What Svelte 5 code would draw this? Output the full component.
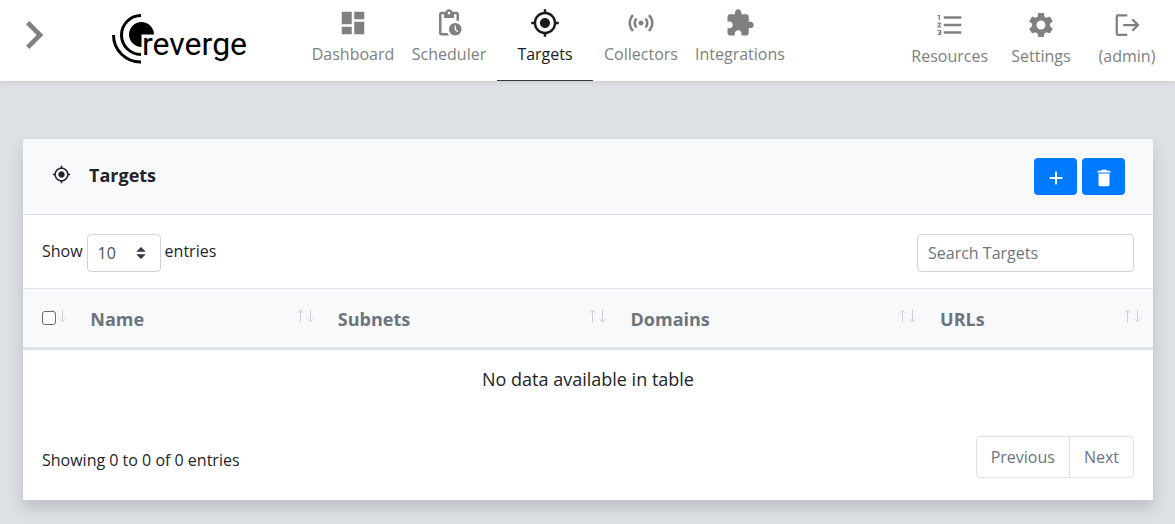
<script>
  const icons = {
    dashboard: 'M3 13h8V3H3v10zm0 8h8v-6H3v6zm10 0h8V11h-8v10zm0-18v6h8V3h-8z',
    scheduler:
      'M17 12c-2.76 0-5 2.24-5 5s2.24 5 5 5 5-2.24 5-5-2.24-5-5-5zm1.65 7.35L16.5 17.2V14h1v2.79l1.85 1.85-.7.71zM18 3h-3.18C14.4 1.84 13.3 1 12 1s-2.4.84-2.82 2H6c-1.1 0-2 .9-2 2v15c0 1.1.9 2 2 2h6.11c-.59-.57-1.07-1.25-1.42-2H6V5h2v3h8V5h2v5.08c.71.1 1.38.31 2 .6V5c0-1.1-.9-2-2-2zm-6 2c-.55 0-1-.45-1-1s.45-1 1-1 1 .45 1 1-.45 1-1 1z',
    targets:
      'M12 8c-2.21 0-4 1.79-4 4s1.79 4 4 4 4-1.79 4-4-1.79-4-4-4zm8.94 3c-.46-4.17-3.77-7.48-7.94-7.94V1h-2v2.06C6.83 3.52 3.52 6.83 3.06 11H1v2h2.06c.46 4.17 3.77 7.48 7.94 7.94V23h2v-2.06c4.17-.46 7.48-3.77 7.94-7.94H23v-2h-2.06zM12 19c-3.87 0-7-3.13-7-7s3.13-7 7-7 7 3.13 7 7-3.13 7-7 7z',
    collectors:
      'M7.76 16.24C6.67 15.16 6 13.66 6 12s.67-3.16 1.76-4.24l1.42 1.42C8.45 9.9 8 10.9 8 12s.45 2.1 1.17 2.83l-1.41 1.41zm8.48 0C17.33 15.16 18 13.66 18 12s-.67-3.16-1.76-4.24l-1.42 1.42C15.55 9.9 16 10.9 16 12s-.45 2.1-1.17 2.83l1.41 1.41zM12 10c-1.1 0-2 .9-2 2s.9 2 2 2 2-.9 2-2-.9-2-2-2zm8 2c0 2.21-.9 4.21-2.35 5.65l1.42 1.42C20.88 17.26 22 14.76 22 12s-1.12-5.26-2.93-7.07l-1.42 1.42C19.1 7.79 20 9.79 20 12zM6.35 6.35L4.93 4.93C3.12 6.74 2 9.24 2 12s1.12 5.26 2.93 7.07l1.42-1.42C4.9 16.21 4 14.21 4 12s.9-4.21 2.35-5.65z',
    integrations:
      'M20.5 11H19V7c0-1.1-.9-2-2-2h-4V3.5C13 2.12 11.88 1 10.5 1S8 2.12 8 3.5V5H4c-1.1 0-1.99.9-1.99 2v3.8H3.5c1.49 0 2.7 1.21 2.7 2.7s-1.21 2.7-2.7 2.7H2V20c0 1.1.9 2 2 2h3.8v-1.5c0-1.49 1.21-2.7 2.7-2.7 1.49 0 2.7 1.21 2.7 2.7V22H17c1.1 0 2-.9 2-2v-4h1.5c1.38 0 2.5-1.12 2.5-2.5S21.88 11 20.5 11z',
    resources:
      'M2 17h2v.5H3v1h1v.5H2v1h3v-4H2v1zm1-9h1V4H2v1h1v3zm-1 3h1.8L2 13.1v.9h3v-1H3.2L5 10.9V10H2v1zm5-6v2h14V5H7zm0 14h14v-2H7v2zm0-6h14v-2H7v2z',
    settings:
      'M19.14 12.94c.04-.3.06-.61.06-.94 0-.32-.02-.64-.07-.94l2.03-1.58c.18-.14.23-.41.12-.61l-1.92-3.32c-.12-.22-.37-.29-.59-.22l-2.39.96c-.5-.38-1.03-.7-1.62-.94l-.36-2.54c-.04-.24-.24-.41-.48-.41h-3.84c-.24 0-.43.17-.47.41l-.36 2.54c-.59.24-1.13.57-1.62.94l-2.39-.96c-.22-.08-.47 0-.59.22L2.74 8.87c-.12.21-.08.47.12.61l2.03 1.58c-.05.3-.09.63-.09.94s.02.64.07.94l-2.03 1.58c-.18.14-.23.41-.12.61l1.92 3.32c.12.22.37.29.59.22l2.39-.96c.5.38 1.03.7 1.62.94l.36 2.54c.05.24.24.41.48.41h3.84c.24 0 .44-.17.47-.41l.36-2.54c.59-.24 1.13-.56 1.62-.94l2.39.96c.22.08.47 0 .59-.22l1.92-3.32c.12-.22.07-.47-.12-.61l-2.01-1.58zM12 15.6c-1.98 0-3.6-1.62-3.6-3.6s1.62-3.6 3.6-3.6 3.6 1.62 3.6 3.6-1.62 3.6-3.6 3.6z',
    logout:
      'M12.2 3.3H4.6a1.7 1.7 0 0 0-1.7 1.7v14a1.7 1.7 0 0 0 1.7 1.7h7.6v-1.8H4.7V5.1h7.5zM16.9 6.8l-1.3 1.3 3 3H9v1.8h9.6l-3 3 1.3 1.3 5.2-5.2z',
    add: 'M19 13h-6v6h-2v-6H5v-2h6V5h2v6h6v2z',
    remove: 'M6 19c0 1.1.9 2 2 2h8c1.1 0 2-.9 2-2V7H6v12zM19 4h-3.5l-1-1h-5l-1 1H5v2h14V4z',
    chevron: 'M10 6L8.59 7.41 13.17 12l-4.58 4.59L10 18l6-6z',
  };
  const mainNav = [
    ['Dashboard', 'dashboard'],
    ['Scheduler', 'scheduler'],
    ['Targets', 'targets'],
    ['Collectors', 'collectors'],
    ['Integrations', 'integrations'],
  ];
  const userNav = [
    ['Resources', 'resources'],
    ['Settings', 'settings'],
    ['(admin)', 'logout'],
  ];
  const columns = ['Name', 'Subnets', 'Domains', 'URLs'];
  let pageLength = $state('10');
  let search = $state('');
</script>

{#snippet icon(name)}
  <svg class="icon" viewBox="0 0 24 24" aria-hidden="true"><path d={icons[name]} /></svg>
{/snippet}

{#snippet sortArrows()}
  <svg class="sort" viewBox="0 0 17 14" aria-hidden="true">
    <path class="up" d="M3.5 13.5V1M.5 4L3.5 1l3 3" />
    <path class="down" d="M13.5 .5V13M10.5 10l3 3 3-3" />
  </svg>
{/snippet}

<header class="topbar">
  <button class="expand" type="button" aria-label="Expand menu">{@render icon('chevron')}</button>
  <a class="logo" href="#home" aria-label="reverge">
    <svg viewBox="0 0 140 54">
      <path d="M29.5 21.5V34A12.5 12.5 0 1 1 42 21.5z" />
      <path class="arc" d="M29 2.5A19.5 19.5 0 0 0 29 41.5" />
      <path class="arc" d="M1.5 22A27 27 0 0 0 29 49" />
      <text x="30" y="42">reverge</text>
    </svg>
  </a>
  <nav class="main-nav" aria-label="Main">
    {#each mainNav as [label, name]}
      <a href="#{name}" class:active={name === 'targets'}>{@render icon(name)}<span>{label}</span></a>
    {/each}
  </nav>
  <nav class="user-nav" aria-label="Account">
    {#each userNav as [label, name]}
      <a href="#{name}">{@render icon(name)}<span>{label}</span></a>
    {/each}
  </nav>
</header>

<main>
  <section class="card">
    <div class="card-header">
      {@render icon('targets')}
      <h1>Targets</h1>
      <div class="actions">
        <button type="button" aria-label="Add target">{@render icon('add')}</button>
        <button type="button" aria-label="Delete targets">{@render icon('remove')}</button>
      </div>
    </div>

    <div class="toolbar">
      <label class="length">
        <span>Show</span>
        <select bind:value={pageLength}>
          <option>10</option>
          <option>25</option>
          <option>50</option>
          <option>100</option>
        </select>
        <span>entries</span>
      </label>
      <input class="search" type="search" placeholder="Search Targets" aria-label="Search Targets" bind:value={search} />
    </div>

    <table>
      <colgroup>
        <col class="c-check" /><col class="c-name" /><col class="c-subnets" /><col class="c-domains" /><col />
      </colgroup>
      <thead>
        <tr>
          <th class="check">
            {@render sortArrows()}
            <input type="checkbox" aria-label="Select all" />
          </th>
          {#each columns as column}
            <th>{column}{@render sortArrows()}</th>
          {/each}
        </tr>
      </thead>
      <tbody>
        <tr><td colspan="5">No data available in table</td></tr>
      </tbody>
    </table>

    <div class="footer">
      <span class="info">Showing 0 to 0 of 0 entries</span>
      <div class="pager">
        <button type="button">Previous</button>
        <button type="button">Next</button>
      </div>
    </div>
  </section>
</main>

<style>
  :global(body) {
    background: #dde1e6;
    color: #212529;
    font: 16px/24px 'Open Sans', 'Noto Sans', sans-serif;
  }
  button,
  input,
  select {
    font: inherit;
    box-sizing: border-box;
    margin: 0;
  }
  .icon {
    display: block;
    fill: currentColor;
    width: 30px;
    height: 30px;
  }
  .topbar {
    display: flex;
    align-items: stretch;
    height: 81px;
    background: #fff;
    box-shadow: 0 2px 4px rgba(0, 0, 0, 0.08);
    color: #808080;
    position: relative;
  }
  .expand {
    border: 0;
    background: none;
    color: inherit;
    padding: 0 0 11px 6px;
  }
  .expand .icon {
    width: 56px;
    height: 56px;
  }
  .logo {
    padding: 13px 0 0 50px;
  }
  .logo svg {
    display: block;
    width: 140px;
    height: 54px;
    overflow: visible;
    fill: #000;
  }
  .logo .arc {
    fill: none;
    stroke: #000;
    stroke-width: 3;
  }
  .logo text {
    font: 32px Roboto, sans-serif;
    stroke: #fff;
    stroke-width: 2px;
    paint-order: stroke;
  }
  nav {
    display: flex;
  }
  nav a {
    display: flex;
    flex-direction: column;
    align-items: center;
    box-sizing: border-box;
    min-width: 96px;
    padding: 8px 6px 0;
    gap: 4px;
    color: inherit;
    text-decoration: none;
  }
  .main-nav {
    margin-left: 53px;
  }
  .main-nav .active {
    color: #1b1b1d;
    border-bottom: 1px solid #343a40;
  }
  .user-nav {
    margin-left: auto;
    padding-right: 5px;
  }
  .user-nav a {
    min-width: 86px;
    padding: 10px 10px 0;
  }
  main {
    padding: 58px 22px 24px 23px;
  }
  .card {
    background: #fff;
    border-radius: 4px 4px 0 0;
    box-shadow: 0 8px 16px rgba(0, 0, 0, 0.15);
  }
  .card-header {
    display: flex;
    align-items: flex-start;
    padding: 19px 28px 19px 29px;
    background: #f8f9fb;
    border-bottom: 1px solid #dee2e6;
    border-radius: 4px 4px 0 0;
  }
  .card-header > .icon {
    width: 19px;
    height: 19px;
    margin-top: 7px;
  }
  h1 {
    margin: 5px 0 0 18px;
    font-size: 18px;
    font-weight: 700;
  }
  .actions {
    display: flex;
    gap: 5px;
    margin-left: auto;
  }
  .actions button {
    display: grid;
    place-items: center;
    width: 43px;
    height: 37px;
    padding: 2px 0 0;
    border: 0;
    border-radius: 4px;
    background: #007bff;
    color: #fff;
  }
  .actions .icon {
    width: 22px;
    height: 22px;
  }
  .toolbar {
    display: flex;
    justify-content: space-between;
    padding: 19px 19px 16px;
    border-bottom: 1px solid #dee2e6;
  }
  .length {
    display: flex;
    align-items: center;
    gap: 4px;
  }
  .length span {
    padding-bottom: 4px;
  }
  select {
    appearance: none;
    width: 74px;
    height: 38px;
    padding: 0 10px;
    border: 1px solid #ced4da;
    border-radius: 4px;
    color: #495057;
    background: #fff
      url("data:image/svg+xml,%3csvg xmlns='http://www.w3.org/2000/svg' viewBox='0 0 4 5'%3e%3cpath fill='%23343a40' d='M2 0L0 2h4zm0 5L0 3h4z'/%3e%3c/svg%3e")
      no-repeat right 14px center / 10px 12px;
  }
  .search {
    appearance: none;
    width: 217px;
    height: 38px;
    padding: 0 10px;
    border: 1px solid #ced4da;
    border-radius: 4px;
  }
  .search::placeholder {
    color: #6c757d;
  }
  table {
    width: 100%;
    table-layout: fixed;
    border-collapse: collapse;
  }
  .c-check {
    width: 4.9%;
  }
  .c-name {
    width: 21.9%;
  }
  .c-subnets {
    width: 25.9%;
  }
  .c-domains {
    width: 27.4%;
  }
  th {
    position: relative;
    padding: 18px 12px 16px;
    background: #f8f9fb;
    border-bottom: 3px solid #dee2e6;
    color: #6c757d;
    font-size: 18px;
    text-align: left;
  }
  .check {
    padding-left: 19px;
    padding-bottom: 18px;
  }
  .check input {
    display: block;
    position: relative;
    appearance: none;
    width: 14px;
    height: 14px;
    border: 1px solid #6b6b6b;
    border-radius: 3px;
    background: #fff;
  }
  .check input:checked {
    background: #007bff;
  }
  .sort {
    position: absolute;
    right: 12px;
    top: 20px;
    width: 17px;
    height: 14px;
    fill: none;
    stroke: #cdcfd2;
  }
  td {
    padding: 17px 12px 19px;
    font-size: 18px;
    text-align: center;
  }
  .footer {
    display: flex;
    align-items: center;
    justify-content: space-between;
    padding: 26px 19px 22px;
  }
  .info {
    padding-top: 6px;
  }
  .pager {
    display: flex;
    border: 1px solid #dee2e6;
    border-radius: 4px;
  }
  .pager button {
    height: 40px;
    padding: 0 14px;
    border: 0;
    background: none;
    color: #6c757d;
  }
  .pager button + button {
    border-left: 1px solid #dee2e6;
  }
</style>
